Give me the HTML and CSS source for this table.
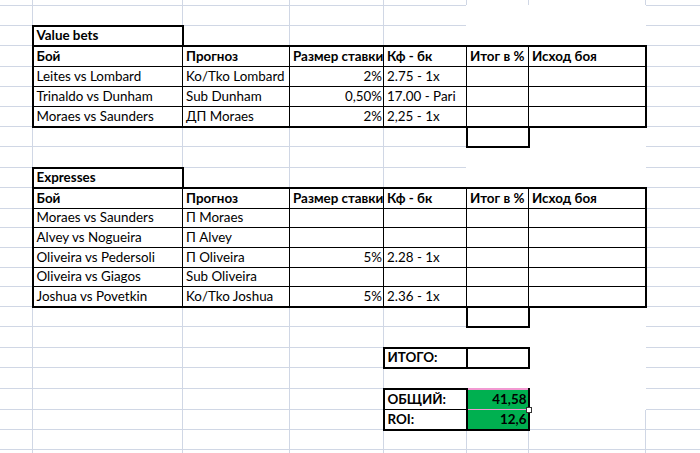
FILE: index.html
```html
<!DOCTYPE html>
<html lang="ru">
<head>
<meta charset="utf-8">
<title>Value bets</title>
<link rel="stylesheet" href="styles.css">
</head>
<body>
<table class="sheet">
  <colgroup>
    <col class="ca"><col class="cb"><col class="cc"><col class="cd"><col class="ce"><col class="cf"><col class="cg"><col class="ch">
  </colgroup>
  <tr class="h15"><td></td><td></td><td></td><td></td><td></td><td></td><td></td><td></td></tr>
  <tr class="h20"><td></td><td></td><td></td><td></td><td></td><td class="w"></td><td class="w"></td><td></td></tr>
  <tr class="h20"><td></td><td class="b T Bo L R bold">Value bets</td><td></td><td></td><td></td><td class="w"></td><td class="w"></td><td></td></tr>
  <tr class="h21"><td></td><td class="b T L bold">Бой</td><td class="b T bold">Прогноз</td><td class="b T bold">Размер ставки</td><td class="b T bold">Кф - бк</td><td class="b T bold">Итог в %</td><td class="b T R bold">Исход боя</td><td></td></tr>
  <tr class="h20"><td></td><td class="b L">Leites vs Lombard</td><td class="b">Ko/Tko Lombard</td><td class="b num">2%</td><td class="b">2.75 - 1x</td><td class="b"></td><td class="b R"></td><td></td></tr>
  <tr class="h20"><td></td><td class="b L">Trinaldo vs Dunham</td><td class="b">Sub Dunham</td><td class="b num">0,50%</td><td class="b">17.00 - Pari</td><td class="b"></td><td class="b R"></td><td></td></tr>
  <tr class="h20"><td></td><td class="b L Bo">Moraes vs Saunders</td><td class="b Bo">ДП Moraes</td><td class="b Bo num">2%</td><td class="b Bo">2,25 - 1x</td><td class="b Bo"></td><td class="b Bo R"></td><td></td></tr>
  <tr class="h20"><td></td><td></td><td></td><td></td><td></td><td class="b T Bo L R"></td><td class="w"></td><td></td></tr>
  <tr class="h21"><td></td><td></td><td></td><td></td><td></td><td class="w"></td><td class="w"></td><td></td></tr>
  <tr class="h20"><td></td><td class="b T Bo L R bold">Expresses</td><td></td><td></td><td></td><td class="w"></td><td class="w"></td><td></td></tr>
  <tr class="h21"><td></td><td class="b T L bold">Бой</td><td class="b T bold">Прогноз</td><td class="b T bold">Размер ставки</td><td class="b T bold">Кф - бк</td><td class="b T bold">Итог в %</td><td class="b T R bold">Исход боя</td><td></td></tr>
  <tr class="h19"><td></td><td class="b L">Moraes vs Saunders</td><td class="b">П Moraes</td><td class="b num"></td><td class="b"></td><td class="b"></td><td class="b R"></td><td></td></tr>
  <tr class="h20"><td></td><td class="b L">Alvey vs Nogueira</td><td class="b">П Alvey</td><td class="b num"></td><td class="b"></td><td class="b"></td><td class="b R"></td><td></td></tr>
  <tr class="h20"><td></td><td class="b L">Oliveira vs Pedersoli</td><td class="b">П Oliveira</td><td class="b num">5%</td><td class="b">2.28 - 1x</td><td class="b"></td><td class="b R"></td><td></td></tr>
  <tr class="h19"><td></td><td class="b L">Oliveira vs Giagos</td><td class="b">Sub Oliveira</td><td class="b num"></td><td class="b"></td><td class="b"></td><td class="b R"></td><td></td></tr>
  <tr class="h20"><td></td><td class="b L Bo">Joshua vs Povetkin</td><td class="b Bo">Ko/Tko Joshua</td><td class="b Bo num">5%</td><td class="b Bo">2.36 - 1x</td><td class="b Bo"></td><td class="b Bo R"></td><td></td></tr>
  <tr class="h20"><td></td><td></td><td></td><td></td><td></td><td class="b T Bo L R"></td><td class="w"></td><td></td></tr>
  <tr class="h21"><td></td><td></td><td></td><td></td><td></td><td class="w"></td><td class="w"></td><td></td></tr>
  <tr class="h20"><td></td><td></td><td></td><td></td><td class="b T Bo L R bold">ИТОГО:</td><td class="b T Bo L R"></td><td class="w"></td><td></td></tr>
  <tr class="h21"><td></td><td></td><td></td><td></td><td></td><td class="w"></td><td class="w"></td><td></td></tr>
  <tr class="h21"><td></td><td></td><td></td><td></td><td class="b T L R bold">ОБЩИЙ:</td><td class="green sel bold num">41,58<span class="handle"></span></td><td class="w"></td><td></td></tr>
  <tr class="h20"><td></td><td></td><td></td><td></td><td class="b Bo L R bold">ROI:</td><td class="b green Bo L R bold num">12,6</td><td></td><td></td></tr>
  <tr class="h20"><td></td><td></td><td></td><td></td><td></td><td></td><td></td><td></td></tr>
  <tr class="h20"><td></td><td></td><td></td><td></td><td></td><td></td><td></td><td></td></tr>
</table>
</body>
</html>
```

FILE: styles.css
```css
html, body {
  margin: 0;
  padding: 0;
  background: #fff;
  overflow: hidden;
  width: 700px;
  height: 453px;
}

.sheet {
  border-collapse: collapse;
  table-layout: fixed;
  width: 725px;
  margin: -10px 0 0 -10px;
  font-family: Lato, "Noto Sans", sans-serif;
  font-size: 13.4px;
  color: #000;
}

.ca { width: 42px; }
.cb { width: 150px; }
.cc { width: 107px; }
.cd { width: 94px; }
.ce { width: 83px; }
.cf { width: 62px; }
.cg { width: 117px; }
.ch { width: 70px; }

.h15 { height: 15px; }
.h19 { height: 19px; }
.h20 { height: 20px; }
.h21 { height: 21px; }

.sheet td {
  border: 1px solid #d0d7e5;
  padding: 0 1px 2px 3px;
  line-height: 15px;
  vertical-align: bottom;
  white-space: nowrap;
  overflow: hidden;
}

/* white-filled cells hide the gridlines */
.sheet td.w { border: 1px double #fff; }

/* thin black cell border */
.sheet td.b { border: 1px double #000; }

/* thick edges of a bordered block */
.sheet td.T { border-top: 2px double #000; }
.sheet td.Bo { border-bottom: 2px double #000; }
.sheet td.L { border-left: 2px double #000; }
.sheet td.R { border-right: 2px double #000; }

.bold { font-weight: 700; }
.num { text-align: right; }

.sheet td.green { background: #00b050; }

/* active cell: pink edge and fill handle */
.sheet td.sel {
  position: relative;
  overflow: visible;
  border-top: 2px double #f29ad2;
  border-left: 2px double #000;
  border-right: 2px double #000;
  border-bottom: 1px double #f29ad2;
}

.handle {
  position: absolute;
  right: -4px;
  bottom: -4px;
  width: 4px;
  height: 4px;
  background: #fff;
  border: 1px solid #333;
}
```
